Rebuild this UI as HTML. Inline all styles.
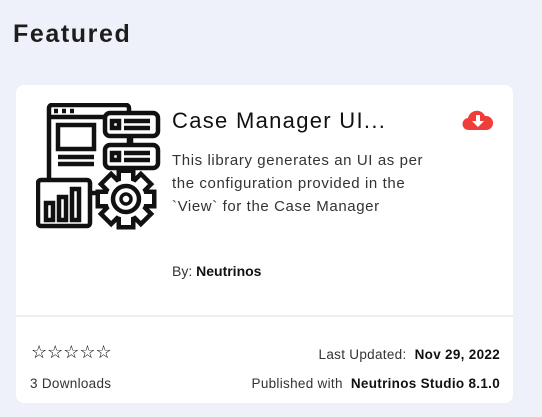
<!DOCTYPE html>
<html><head><style>
*{margin:0;padding:0;box-sizing:border-box}
body{width:542px;height:417px;background:#eef1f9;font-family:"Liberation Sans",sans-serif;position:relative;overflow:hidden;color:#222}
h1{position:absolute;left:13px;top:20px;font-size:25px;font-weight:bold;letter-spacing:1.6px;color:#1d1d1d}
.card{position:absolute;left:16px;top:85px;width:497px;height:318px;background:#fff;border-radius:8px}
.t{position:absolute;left:156px;top:23px;font-size:22px;letter-spacing:1.3px;color:#111}
.d{position:absolute;left:156px;top:64px;font-size:15px;line-height:23px;color:#333;width:300px;white-space:nowrap;letter-spacing:0.6px}
.by{position:absolute;left:156px;top:178px;font-size:14px;color:#333}
.hr{position:absolute;left:0;top:230px;width:497px;height:2px;background:#eee}
.s{position:absolute;left:15px;top:257px;font-size:18px;letter-spacing:0px;color:#000}
.dl{position:absolute;left:14px;top:291px;font-size:13.5px;color:#333;letter-spacing:0.3px}
.r{position:absolute;right:13px;font-size:13.5px;color:#333;text-align:right;letter-spacing:0.3px}
b{color:#111}
</style></head><body>
<h1>Featured</h1>
<div class="card">
<svg style="position:absolute;left:20px;top:18px" width="126" height="128" viewBox="0 0 126 128" fill="none" stroke="#111" stroke-width="4.5">
<rect x="13" y="2" width="80" height="88" rx="3"/>
<line x1="13" y1="14" x2="68" y2="14"/>
<line x1="18" y1="8" x2="22" y2="8"/><line x1="26" y1="8" x2="30" y2="8"/><line x1="34" y1="8" x2="38" y2="8"/>
<rect x="22" y="22" width="36" height="24"/>
<line x1="22" y1="54" x2="58" y2="54"/><line x1="22" y1="61" x2="58" y2="61"/>
<rect x="69" y="10" width="53" height="23" rx="5" fill="#fff"/>
<rect x="69" y="42" width="53" height="23" rx="5" fill="#fff"/>
<rect x="76" y="18" width="7" height="7"/><rect x="76" y="50" width="7" height="7"/>
<line x1="88" y1="18" x2="114" y2="18"/><line x1="88" y1="25" x2="114" y2="25"/>
<line x1="88" y1="50" x2="114" y2="50"/><line x1="88" y1="57" x2="114" y2="57"/>
<line x1="95" y1="33" x2="95" y2="42"/>
<rect x="2" y="77" width="52" height="46" rx="3" fill="#fff"/>
<rect x="10" y="100" width="7" height="17"/><rect x="23" y="94" width="7" height="23"/><rect x="36" y="86" width="7" height="31"/>
<g transform="translate(90 96)">
<g fill="#111" stroke="#111" stroke-width="9">
<circle r="19"/>
<rect x="-5" y="-26" width="10" height="9" transform="rotate(0)"/>
<rect x="-5" y="-26" width="10" height="9" transform="rotate(45)"/>
<rect x="-5" y="-26" width="10" height="9" transform="rotate(90)"/>
<rect x="-5" y="-26" width="10" height="9" transform="rotate(135)"/>
<rect x="-5" y="-26" width="10" height="9" transform="rotate(180)"/>
<rect x="-5" y="-26" width="10" height="9" transform="rotate(225)"/>
<rect x="-5" y="-26" width="10" height="9" transform="rotate(270)"/>
<rect x="-5" y="-26" width="10" height="9" transform="rotate(315)"/>
</g>
<g fill="#fff" stroke="none">
<circle r="19"/>
<rect x="-5" y="-26" width="10" height="9" transform="rotate(0)"/>
<rect x="-5" y="-26" width="10" height="9" transform="rotate(45)"/>
<rect x="-5" y="-26" width="10" height="9" transform="rotate(90)"/>
<rect x="-5" y="-26" width="10" height="9" transform="rotate(135)"/>
<rect x="-5" y="-26" width="10" height="9" transform="rotate(180)"/>
<rect x="-5" y="-26" width="10" height="9" transform="rotate(225)"/>
<rect x="-5" y="-26" width="10" height="9" transform="rotate(270)"/>
<rect x="-5" y="-26" width="10" height="9" transform="rotate(315)"/>
</g>
<circle r="13" stroke-width="4.5"/>
<circle r="5" stroke-width="3.5"/>
</g>
</svg>
<div class="t">Case Manager UI...</div>
<svg style="position:absolute;left:446px;top:24px" width="32" height="22" viewBox="0 0 32 22"><path d="M7 21a6 6 0 0 1-1-12 9 9 0 0 1 17-2 7 7 0 0 1 2 14z" fill="#ef3e3a"/><path d="M14 6h4v6h4l-6 6-6-6h4z" fill="#fff"/></svg>
<div class="d">This library generates an UI as per<br>the configuration provided in the<br>`View` for the Case Manager</div>
<div class="by">By: <b>Neutrinos</b></div>
<div class="hr"></div>
<div class="s">☆☆☆☆☆</div>
<div class="dl">3 Downloads</div>
<div class="r" style="top:262px">Last Updated:&nbsp; <b>Nov 29, 2022</b></div>
<div class="r" style="top:291px">Published with &nbsp;<b>Neutrinos Studio 8.1.0</b></div>
</div>
</body></html>
